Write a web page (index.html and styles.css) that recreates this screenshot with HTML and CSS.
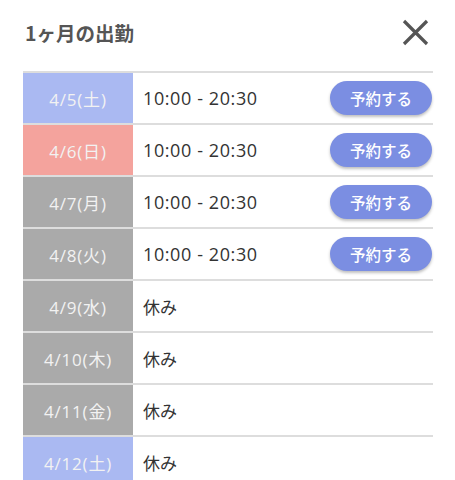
FILE: index.html
```html
<!DOCTYPE html>
<html lang="ja">
<head>
    <meta charset="UTF-8">
    <meta name="viewport" content="width=device-width, initial-scale=1.0">
    <title>1ヶ月の出勤</title>
    <link rel="stylesheet" href="styles.css">
</head>
<body>
    <div class="modal">
        <div class="modal-header">
            <h2>1ヶ月の出勤</h2>
            <button class="close-btn" aria-label="閉じる">
                <svg width="27" height="27" viewBox="0 0 27 27">
                    <path d="M2 2 L25 25 M25 2 L2 25" stroke="#555" stroke-width="3.2" fill="none"/>
                </svg>
            </button>
        </div>

        <div class="schedule">
            <div class="row">
                <div class="date sat">4/5(土)</div>
                <div class="shift">10:00 - 20:30</div>
                <button class="reserve-btn">予約する</button>
            </div>
            <div class="row">
                <div class="date sun">4/6(日)</div>
                <div class="shift">10:00 - 20:30</div>
                <button class="reserve-btn">予約する</button>
            </div>
            <div class="row">
                <div class="date">4/7(月)</div>
                <div class="shift">10:00 - 20:30</div>
                <button class="reserve-btn">予約する</button>
            </div>
            <div class="row">
                <div class="date">4/8(火)</div>
                <div class="shift">10:00 - 20:30</div>
                <button class="reserve-btn">予約する</button>
            </div>
            <div class="row">
                <div class="date">4/9(水)</div>
                <div class="shift off">休み</div>
            </div>
            <div class="row">
                <div class="date">4/10(木)</div>
                <div class="shift off">休み</div>
            </div>
            <div class="row">
                <div class="date">4/11(金)</div>
                <div class="shift off">休み</div>
            </div>
            <div class="row">
                <div class="date sat">4/12(土)</div>
                <div class="shift off">休み</div>
            </div>
        </div>
    </div>
</body>
</html>
```

FILE: styles.css
```css
html, body {
    margin: 0;
    padding: 0;
    height: 480px;
    overflow: hidden;
}

body {
    font-family: "Open Sans", "Noto Sans CJK JP", sans-serif;
    background-color: white;
    color: #333;
}

.modal {
    width: 455px;
}

.modal-header {
    display: flex;
    align-items: center;
    justify-content: space-between;
    height: 65px;
    padding: 0 26px 0 25px;
}

.modal-header h2 {
    margin: 0;
    font-family: "Noto Sans CJK JP", sans-serif;
    font-size: 19.5px;
    font-weight: bold;
    color: #555;
}

.close-btn {
    width: 27px;
    height: 27px;
    padding: 0;
    border: none;
    background: none;
    cursor: pointer;
}

    .close-btn svg {
        display: block;
    }

.schedule {
    margin: 6px 22px 0 23px;
    border-top: 2px solid #ddd;
}

.row {
    display: flex;
    align-items: center;
    height: 50px;
    border-bottom: 2px solid #ddd;
}

.date {
    width: 110px;
    height: 100%;
    display: flex;
    align-items: center;
    justify-content: center;
    flex-shrink: 0;
    background-color: #aaa;
    color: #f2f2f2;
    font-size: 17px;
    letter-spacing: 0.8px;
}

    .date.sat {
        background-color: #aab9f2;
    }

    .date.sun {
        background-color: #f4a39d;
    }

.shift {
    flex: 1;
    padding-left: 10px;
    font-size: 18px;
    letter-spacing: 0.6px;
    color: #333;
}

    .shift.off {
        font-family: "Noto Sans CJK JP", sans-serif;
        font-size: 17px;
        letter-spacing: 0;
    }

.reserve-btn {
    width: 102px;
    height: 34px;
    margin-right: 1px;
    border: none;
    border-radius: 17px;
    background-color: #7b8ee2;
    color: white;
    font-family: "Noto Sans CJK JP", sans-serif;
    font-size: 15.5px;
    font-weight: 500;
    box-shadow: 0 2px 3px rgba(0, 0, 0, 0.25);
    cursor: pointer;
}
```
